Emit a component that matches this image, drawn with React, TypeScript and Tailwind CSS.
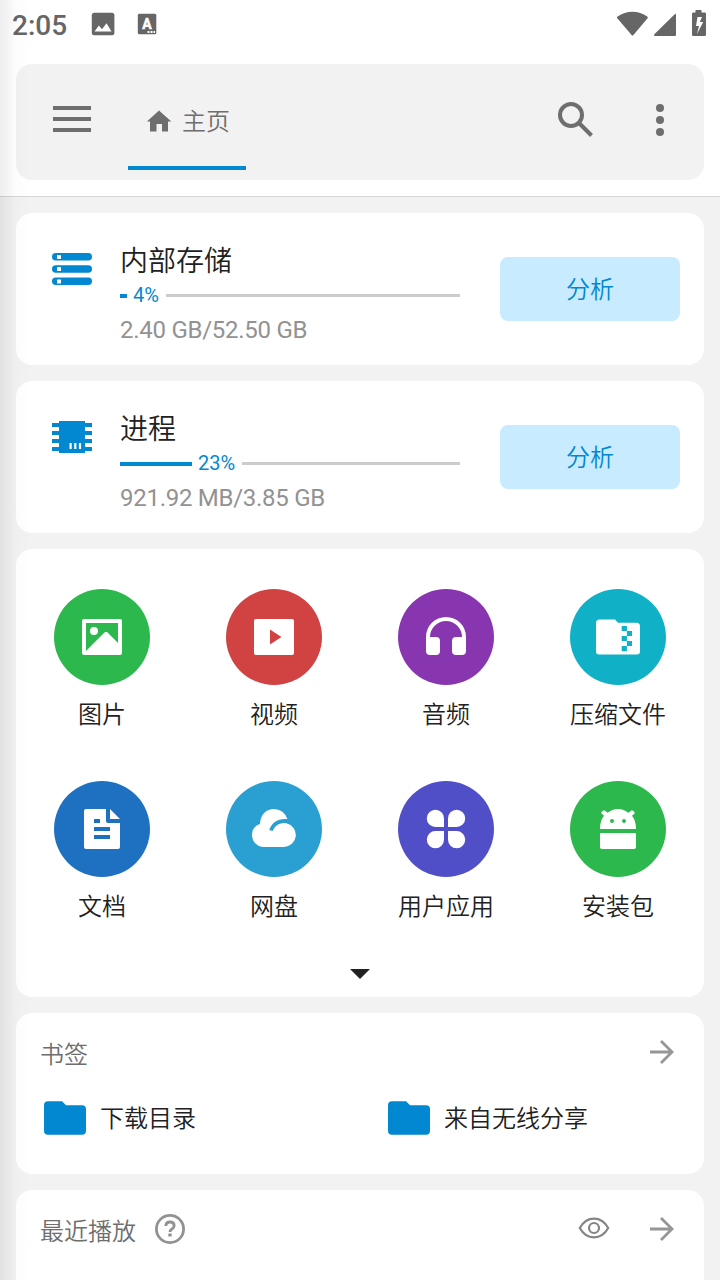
import React, { ReactNode } from 'react';

interface UsageCardProps {
  icon: ReactNode;
  title: string;
  percent: string;
  doneClass: string;
  detail: string;
}

interface Category {
  label: string;
  color: string;
  icon: ReactNode;
}

const StatusBar = () => (
  <div className="h-12 flex items-center justify-between pl-3 pr-3.5 text-[#666]">
    <div className="flex items-center">
      <span className="w-[79px] text-[28px] leading-8 font-medium pt-[3px]">2:05</span>
      <svg width="24" height="24" viewBox="0 0 24 24" fill="none">
        <rect x="0.800" y="0.800" width="22.600" height="22.400" rx="2.500" fill="#666" />
        <path d="M3.500 19.500l4.300-6 3.200 3.800 4.500-6 5 8.200z" fill="#fff" />
      </svg>
      <svg className="ml-5" width="24" height="24" viewBox="0 0 24 24">
        <rect x="2.800" y="1.800" width="18.500" height="20.400" rx="1.500" fill="#666" />
        <text x="12" y="16.700" textAnchor="middle" fontSize="14" fontWeight="700" fill="#fff" stroke="#fff" strokeWidth="0.500">A</text>
        <path d="M12.500 19h2v2h-2zM15.500 19h2v2h-2zM18.500 19h1.500v2h-1.500z" fill="#fff" />
      </svg>
    </div>
    <svg width="90" height="28" viewBox="0 0 90 28" fill="#666">
      <path d="M1.500 8.500C0.800 7.900 0.800 7.200 1.600 6.600C10 0.200 23 0.200 31.200 6.600C32 7.200 32 7.900 31.400 8.600L17.400 25C16.800 25.700 16.200 25.700 15.600 25z" />
      <path d="M38.600 24L58.700 4.200C59.400 3.600 60 3.800 60 4.700V24.800Q60 26 58.800 26H39.200C37.800 26 37.600 25 38.600 24z" />
      <path fillRule="evenodd" d="M79.500 0h6v2.500h3.300Q90 2.500 90 3.800V24.800Q90 26 88.800 26H77.200Q76 26 76 24.800V3.800Q76 2.500 77.200 2.500h2.300zM81.500 7l-1.500 9h3l-2 8 6.200-12h-3.400l2.200-5z" />
    </svg>
  </div>
);

const Toolbar = () => (
  <div className="mx-4 mt-4 h-[116px] rounded-2xl bg-[#f2f2f2] flex items-center justify-between pl-9 pr-10">
    <div className="flex h-full">
      <button className="flex items-center pb-1.5">
        <svg width="40" height="32" viewBox="0 0 40 32" fill="#6e6e6e">
          <path d="M1 3h38v4H1zM1 14h38v4H1zM1 25h38v4H1z" />
        </svg>
      </button>
      <div className="ml-9 mb-2.5 w-[118px] border-b-4 border-[#0288d1] flex items-center pl-[18px] pt-3">
        <svg width="26" height="24" viewBox="0 0 26 24" fill="#6e6e6e">
          <path d="M13 1.500L25.300 12.500h-3.300v10h-6v-7.500h-5.500v7.500h-6.500v-10H0.900z" />
        </svg>
        <span className="ml-2.5 pt-0.5 text-2xl leading-8 font-[350] text-[#6e6e6e]">主页</span>
      </div>
    </div>
    <div className="flex items-center pb-1">
      <svg className="mb-0.5" width="40" height="40" viewBox="0 0 40 40" fill="none" stroke="#6e6e6e" strokeWidth="4">
        <circle cx="15" cy="16" r="11" />
        <path d="M23.500 24.500l12 12" />
      </svg>
      <svg className="ml-[60px]" width="8" height="32" viewBox="0 0 8 32" fill="#6e6e6e">
        <circle cx="4" cy="4" r="4" />
        <circle cx="4" cy="16" r="4" />
        <circle cx="4" cy="28" r="4" />
      </svg>
    </div>
  </div>
);

const StorageIcon = () => (
  <svg width="40" height="32" viewBox="0 0 40 32">
    <g fill="#0288d1">
      <rect y="0" width="40" height="7.500" rx="3.750" />
      <rect y="12.200" width="40" height="7.500" rx="3.750" />
      <rect y="24.500" width="40" height="7.500" rx="3.750" />
    </g>
    <path d="M5 2h4v4H5zM5 14h4v4H5zM5 26.500h4v4H5z" fill="#fff" />
  </svg>
);

const ChipIcon = () => (
  <svg width="40" height="32" viewBox="0 0 40 32">
    <path d="M7 0h26v32H7zM0 2h40v4H0zM0 10h40v4H0zM0 18h40v4H0zM0 26h40v4H0z" fill="#0288d1" />
    <path d="M17.500 22h2.200v6h-2.200zM22.200 22h2.200v6h-2.200zM26.900 22h2.200v6h-2.200z" fill="#fff" />
  </svg>
);

const UsageCard = ({ icon, title, percent, doneClass, detail }: UsageCardProps) => (
  <div className="h-[152px] rounded-2xl bg-white flex items-start pl-9 pr-6">
    <div className="mt-10">{icon}</div>
    <div className="ml-7 mt-[33px] w-[340px]">
      <div className="text-[28px] leading-8 font-[350] text-[#212121]">{title}</div>
      <div className="mt-[5px] h-6 flex items-center text-[#0288d1]">
        <div className={`mt-px h-1 bg-[#0288d1] ${doneClass}`} />
        <span className="ml-1.5 mr-[7px] text-xl leading-6">{percent}</span>
        <div className="mt-px h-[3px] flex-1 bg-[#ccc]" />
      </div>
      <div className="mt-[7px] text-2xl leading-8 tracking-[-0.27px] text-[#929292]">{detail}</div>
    </div>
    <button className="ml-10 mt-11 w-[180px] h-16 pt-0.5 rounded-lg bg-[#c9ebff] text-2xl font-[350] text-[#0288d1]">分析</button>
  </div>
);

const categories: Category[] = [
  {
    label: '图片',
    color: 'bg-[#2db84d]',
    icon: (
      <path fillRule="evenodd" d="M30 30h36q2 0 2 2v32q0 2-2 2H30q-2 0-2-2V32q0-2 2-2zM32 34v28l18.700-18.700q1.300-1.300 2.600 0L64 54V34zM36 42a4 4 0 1 0 8 0a4 4 0 1 0-8 0z" />
    ),
  },
  {
    label: '视频',
    color: 'bg-[#d14343]',
    icon: <path fillRule="evenodd" d="M30 30h36q2 0 2 2v32q0 2-2 2H30q-2 0-2-2V32q0-2 2-2zM44 40.500v15l11.500-7.500z" />,
  },
  {
    label: '音频',
    color: 'bg-[#8835b0]',
    icon: (
      <path d="M28 48a20 20 0 0 1 40 0v14q0 4-4 4h-6q-4 0-4-4V52q0-4 4-4h6a16 16 0 0 0-32 0h6q4 0 4 4v10q0 4-4 4h-6q-4 0-4-4z" />
    ),
  },
  {
    label: '压缩文件',
    color: 'bg-[#10b0c7]',
    icon: (
      <>
        <path d="M29.500 30.500H45l3 3.300h18.500q3.500 0 3.500 3.500V62.500q0 3-3 3H29q-3 0-3-3V34q0-3.500 3.500-3.500z" />
        <path fill="#10b0c7" d="M51.700 37h5.200v5h5.100v5h-5.100v5h5.100v5h-5.100v5.200h-5.200v-5.200h5.200V52h-5.200v-5h5.200v-5h-5.200z" />
      </>
    ),
  },
  {
    label: '文档',
    color: 'bg-[#1e70c1]',
    icon: (
      <path fillRule="evenodd" d="M32 28h20v12q0 2 2 2h12v24q0 2-2 2H32q-2 0-2-2V30q0-2 2-2zM40 38v4h6v-4zM40 46v4h16v-4zM40 54v4h16v-4zM56 28l10 10H56z" />
    ),
  },
  {
    label: '网盘',
    color: 'bg-[#2a9fd2]',
    icon: (
      <>
        <path d="M34 42.500C34.500 33 40.500 28 48 28Q57.500 28 61.500 38.200C53 37.200 46 41 43.200 49l3.800 4-9 9-8-12z" />
        <path d="M34.500 42.700Q26 45.500 26 54a12 12 0 0 0 12 12h20a12 12 0 1 0-11.500-16l-3.500-1-4-6z" />
      </>
    ),
  },
  {
    label: '用户应用',
    color: 'bg-[#514fc8]',
    icon: (
      <path d="M46 46h-8.500a8.600 8.600 0 1 1 8.500-8.500zM50 46v-8.500a8.600 8.600 0 1 1 8.500 8.500zM46 50v8.500a8.600 8.600 0 1 1-8.500-8.500zM50 50h8.500a8.600 8.600 0 1 1-8.500 8.500z" />
    ),
  },
  {
    label: '安装包',
    color: 'bg-[#2db84d]',
    icon: (
      <>
        <path fillRule="evenodd" d="M30 48q0-8.500 4-13.200l-2.800-2.600q0.200-2.600 3-3l3.500 2.600Q42 28 48 28t10.300 3.800l3.500-2.600q2.800 0.400 3 3L62 34.800Q66 39.500 66 48zM40 40a2 2 0 1 0 4 0a2 2 0 1 0-4 0zM52 40a2 2 0 1 0 4 0a2 2 0 1 0-4 0z" />
        <path d="M30 52h36v14q0 2-2 2H32q-2 0-2-2z" />
      </>
    ),
  },
];

const CategoryGrid = () => (
  <div className="h-[448px] rounded-2xl bg-white pt-10">
    <div className="grid grid-cols-4 gap-y-12">
      {categories.map((item) => (
        <div key={item.label} className="h-36 flex flex-col items-center">
          <div className={`size-24 rounded-full ${item.color}`}>
            <svg width="96" height="96" viewBox="0 0 96 96" fill="#fff">
              {item.icon}
            </svg>
          </div>
          <span className="mt-3.5 text-2xl leading-8 font-[350] text-[#212121]">{item.label}</span>
        </div>
      ))}
    </div>
    <svg className="mx-auto mt-11" width="20" height="10" viewBox="0 0 20 10" fill="#212121">
      <path d="M0 0h20L10 10z" />
    </svg>
  </div>
);

const ArrowIcon = () => (
  <svg width="24" height="24" viewBox="0 0 24 24" fill="none" stroke="#969696" strokeWidth="2.800">
    <path d="M0 12h22M11 1l11 11-11 11" />
  </svg>
);

const Bookmark = ({ label }: { label: string }) => (
  <div className="flex items-center pl-1">
    <svg width="42" height="34" viewBox="0 0 42 34" fill="#0288d1">
      <path d="M4 0.300h14l4 4h16q4 0 4 4V29.700q0 4-4 4H4q-4 0-4-4V4.300q0-4 4-4z" />
    </svg>
    <span className="ml-3.5 pt-0.5 text-2xl leading-8 font-[350] text-[#212121]">{label}</span>
  </div>
);

export default function App() {
  return (
    <div className="relative w-[720px] h-[1280px] overflow-hidden bg-[#f2f2f2] font-['Roboto','Noto_Sans_CJK_SC',sans-serif]">
      <header className="h-[197px] bg-white border-b border-[#d6d6d6]">
        <StatusBar />
        <Toolbar />
      </header>

      <main className="p-4 flex flex-col gap-4">
        <UsageCard icon={<StorageIcon />} title="内部存储" percent="4%" doneClass="w-[7px]" detail="2.40 GB/52.50 GB" />
        <UsageCard icon={<ChipIcon />} title="进程" percent="23%" doneClass="w-[72px]" detail="921.92 MB/3.85 GB" />
        <CategoryGrid />

        <div className="h-[161px] rounded-2xl bg-white pl-6 pt-[23px]">
          <div className="h-8 flex items-center justify-between pr-[30px]">
            <span className="pt-1.5 text-2xl leading-8 font-[350] text-[#6e6e6e]">书签</span>
            <ArrowIcon />
          </div>
          <div className="mt-[33px] grid grid-cols-[344px_1fr]">
            <Bookmark label="下载目录" />
            <Bookmark label="来自无线分享" />
          </div>
        </div>

        <div className="h-[161px] shrink-0 rounded-2xl bg-white pl-6 pt-[23px]">
          <div className="h-8 flex items-center justify-between pr-[30px]">
            <div className="flex items-center">
              <span className="pt-1.5 text-2xl leading-8 font-[350] text-[#6e6e6e]">最近播放</span>
              <svg className="ml-[18px]" width="32" height="32" viewBox="0 0 32 32" fill="none" stroke="#929292">
                <circle cx="16" cy="16" r="13.600" strokeWidth="2.800" />
                <path d="M11.800 13q0.200-4 4.200-4t4.200 3.600q0 2-2.200 3.400-2 1.200-2 3" strokeWidth="2.800" />
                <path d="M16 20.500v3" strokeWidth="3.400" />
              </svg>
            </div>
            <div className="flex items-center">
              <svg className="mb-0.5" width="32" height="24" viewBox="0 0 32 24" fill="none" stroke="#858585" strokeWidth="2.200">
                <path d="M1.800 12Q7 2.600 16 2.600T30.200 12Q25 21.400 16 21.400T1.800 12z" />
                <circle cx="16" cy="12" r="5" />
              </svg>
              <div className="ml-10">
                <ArrowIcon />
              </div>
            </div>
          </div>
        </div>
      </main>

      {/* drawer edge shadow */}
      <div className="absolute inset-y-0 left-0 w-8 pointer-events-none bg-linear-to-r from-black/7 via-black/1 via-50% to-transparent" />
    </div>
  );
}
